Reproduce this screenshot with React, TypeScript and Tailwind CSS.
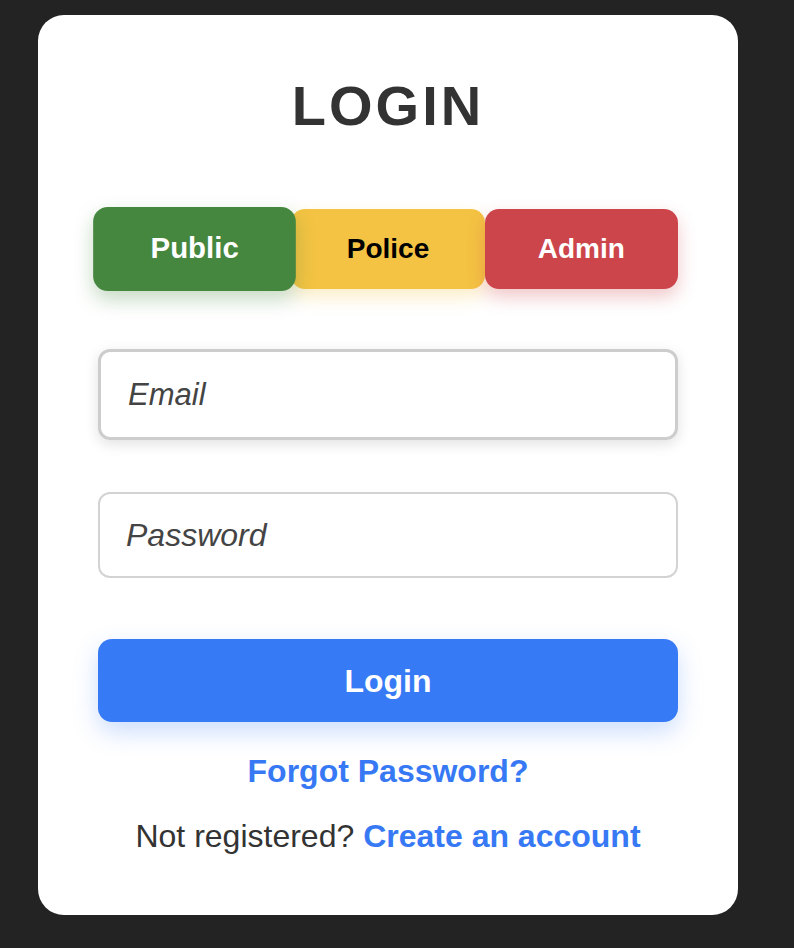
export default function App() {
  const roles = [
    { label: "Public", cls: "bg-[#45873f] text-white shadow-[0_8px_18px_rgba(69,135,63,0.3)] scale-105", },
    { label: "Police", cls: "bg-[#f4c343] text-black shadow-[0_8px_18px_rgba(244,195,67,0.3)]" },
    { label: "Admin", cls: "bg-[#cc454b] text-white shadow-[0_8px_18px_rgba(204,69,75,0.3)]" },
  ];

  return (
    <div
      className="min-h-screen bg-[#232323] flex pl-[38px] pt-[15px]"
      style={{ fontFamily: "'Liberation Sans', Arial, sans-serif" }}
    >
      <div className="w-[700px] h-[900px] bg-white rounded-[26px] px-[60px] pt-[63px] flex flex-col">
        {/* Title */}
        <h1 className="text-center text-[56px] leading-none font-bold tracking-[3px] text-[#333]">
          LOGIN
        </h1>

        {/* Role switch */}
        <div className="grid grid-cols-3 mt-[75px]">
          {roles.map((r) => (
            <button
              key={r.label}
              className={
                "h-[80px] rounded-[14px] text-[28px] font-bold flex items-center justify-center " + r.cls
              }
            >
              {r.label}
            </button>
          ))}
        </div>

        {/* Inputs */}
        <input
          placeholder="Email"
          className="mt-[60px] h-[91px] w-full rounded-[12px] border-[3px] border-[#cdcdcd] px-[27px] text-[31px] italic text-[#444] placeholder:text-[#444] outline-none shadow-[0_4px_14px_rgba(0,0,0,0.12)]"
        />
        <input
          type="password"
          placeholder="Password"
          className="mt-[52px] h-[86px] w-full rounded-[12px] border-2 border-[#d3d3d3] px-[26px] text-[32px] italic text-[#444] placeholder:text-[#444] outline-none"
        />

        {/* Submit */}
        <button className="mt-[61px] h-[83px] w-full rounded-[14px] bg-[#377af6] text-white text-[32px] font-bold shadow-[0_10px_24px_rgba(55,122,246,0.25)]">
          Login
        </button>

        <a className="mt-[31px] block text-center text-[32px] leading-[36px] font-bold text-[#3779f5]">
          Forgot Password?
        </a>

        <p className="mt-[29px] text-center text-[32px] leading-[36px] text-[#333]">
          Not registered? <a className="font-bold text-[#3779f5]">Create an account</a>
        </p>
      </div>
    </div>
  );
}
